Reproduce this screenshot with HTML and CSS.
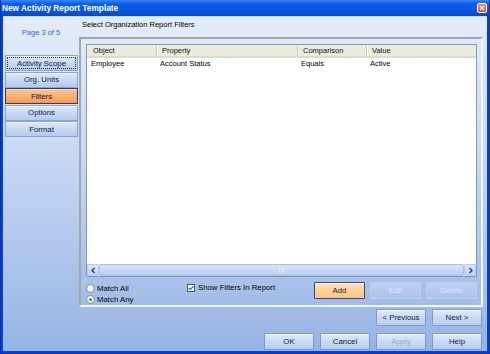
FILE: index.html
```html
<!DOCTYPE html>
<html lang="en">

<head>
    <meta charset="UTF-8">
    <title>New Activity Report Template</title>
    <link rel="stylesheet" href="styles.css">
</head>

<body>
    <div class="window">
        <div class="titlebar">
            <span class="title">New Activity Report Template</span>
            <span class="close">
                <svg width="10" height="10" viewBox="0 0 10 10">
                    <path d="M3 3L7 7M7 3L3 7" stroke="#fff" stroke-width="1.4" fill="none" />
                </svg>
            </span>
        </div>

        <div class="client">
            <div class="top">
                <div class="nav">
                    <div class="page">Page 3 of 5</div>
                    <div class="steps">
                        <div class="step focus"><span>Activity Scope</span></div>
                        <div class="step">Org. Units</div>
                        <div class="step active">Filters</div>
                        <div class="step">Options</div>
                        <div class="step">Format</div>
                    </div>
                </div>

                <div class="main">
                    <div class="heading">Select Organization Report Filters</div>
                    <div class="panel">
                        <div class="list">
                            <div class="list-head">
                                <span>Object</span>
                                <span>Property</span>
                                <span>Comparison</span>
                                <span>Value</span>
                            </div>
                            <div class="list-body">
                                <div class="list-row">
                                    <span>Employee</span>
                                    <span>Account Status</span>
                                    <span>Equals</span>
                                    <span>Active</span>
                                </div>
                            </div>
                            <div class="hscroll">
                                <span class="arrow">
                                    <svg width="7" height="7" viewBox="0 0 7 7">
                                        <path d="M4.5 1L2 3.5L4.5 6" stroke="#2a3f7c" stroke-width="1.4" fill="none" />
                                    </svg>
                                </span>
                                <span class="thumb">
                                    <svg width="7" height="5" viewBox="0 0 7 5">
                                        <path d="M1.5 0V5M3.5 0V5M5.5 0V5" stroke="#e9f0fb" stroke-width="1" />
                                    </svg>
                                </span>
                                <span class="arrow">
                                    <svg width="7" height="7" viewBox="0 0 7 7">
                                        <path d="M2.5 1L5 3.5L2.5 6" stroke="#2a3f7c" stroke-width="1.4" fill="none" />
                                    </svg>
                                </span>
                            </div>
                        </div>

                        <div class="controls">
                            <div class="radios">
                                <div class="radio"><span class="dot"></span>Match All</div>
                                <div class="radio"><span class="dot on"></span>Match Any</div>
                            </div>
                            <div class="check">
                                <span class="box">
                                    <svg width="6" height="6" viewBox="0 0 6 6">
                                        <path d="M0.7 3L2.3 4.6L5.4 1.2" stroke="#21a121" stroke-width="1.4" fill="none" />
                                    </svg>
                                </span>
                                Show Filters In Report
                            </div>
                            <div class="actions">
                                <button class="btn hot">Add</button>
                                <button class="btn off">Edit</button>
                                <button class="btn off">Delete</button>
                            </div>
                        </div>
                    </div>
                </div>
            </div>

            <div class="footer">
                <div class="row">
                    <button class="btn">&lt; Previous</button>
                    <button class="btn">Next &gt;</button>
                </div>
                <div class="row">
                    <button class="btn">OK</button>
                    <button class="btn">Cancel</button>
                    <button class="btn dim">Apply</button>
                    <button class="btn">Help</button>
                </div>
            </div>
        </div>
    </div>
</body>

</html>
```

FILE: styles.css
```css
* {
    box-sizing: border-box;
}

body {
    margin: 0;
    font-family: 'Liberation Sans', Arial, sans-serif;
    font-size: 7.5px;
    color: #000;
}

.window {
    width: 490px;
    height: 354px;
    display: flex;
    flex-direction: column;
    background: #0842d2;
    border-left: 1px solid #0a2fb0;
    border-right: 1px solid #0a2fb0;
    border-bottom: 1px solid #0a2fb0;
}

.titlebar {
    height: 16px;
    flex: none;
    display: flex;
    align-items: center;
    justify-content: space-between;
    padding: 0 2px 0 1px;
    background: linear-gradient(#3a86f4, #0b5ce8 25%, #0656e0 70%, #0648cc);
    color: #fff;
    font-weight: bold;
    font-size: 8.3px;
}

.close {
    width: 10px;
    height: 10px;
    border: 1px solid #fff;
    border-radius: 2px;
    background: linear-gradient(#f08a6a, #dc4a22);
    display: flex;
}

.close svg {
    margin: -1px;
}

.client {
    flex: 1;
    margin: 0 2px 2px;
    display: flex;
    flex-direction: column;
    background: linear-gradient(#e3ecfa, #c8d9f3 40%, #96b4e3);
    border-top: 1px solid #c9dbf6;
}

/* upper part: steps on the left, filters on the right */
.top {
    height: 290px;
    display: flex;
}

.nav {
    width: 76px;
}

.page {
    padding-top: 11px;
    line-height: 10px;
    text-align: center;
    color: #3568c8;
}

.steps {
    margin-top: 17px;
    padding-left: 2px;
    display: flex;
    flex-direction: column;
    gap: 0.5px;
}

.step {
    width: 73px;
    height: 16px;
    display: flex;
    align-items: center;
    justify-content: center;
    border: 1px solid #86a3d6;
    box-shadow: inset 0 1px 0 #f2f6fd;
    background: linear-gradient(#dce7f9, #b3caef);
    color: #0f1b3c;
    font-size: 7.8px;
}

.step.focus span {
    display: flex;
    align-items: center;
    justify-content: center;
    width: 69px;
    height: 12px;
    border: 1px dotted #27324a;
}

.step.active {
    border-color: #2e3b78;
    box-shadow: inset 0 1px 0 #ffd9b4;
    background: linear-gradient(#ffc791, #f8994c);
}

.main {
    flex: 1;
}

.heading {
    height: 20px;
    padding: 3px 0 0 3px;
    line-height: 10px;
}

.panel {
    height: 270px;
    margin-right: 4px;
    border: 2px solid;
    border-color: #a2a6ad #f3f7fd #f3f7fd #a2a6ad;
    display: flex;
    flex-direction: column;
}

.list {
    height: 234px;
    margin: 5px 4px 0 5px;
    border: 1px solid #7f9db9;
    background: #fff;
    display: flex;
    flex-direction: column;
}

.list-head,
.list-row {
    display: grid;
    grid-template-columns: 69px 141px 69px 1fr;
}

.list-head {
    height: 13px;
    background: #ebeadb;
    border-bottom: 2px solid #dedbca;
}

.list-head span {
    position: relative;
    padding-left: 6px;
    line-height: 11px;
    color: #111;
}

.list-head span + span::before {
    content: '';
    position: absolute;
    left: 0;
    top: 1px;
    height: 10px;
    border-left: 1px solid #c9c6b4;
    border-right: 1px solid #fff;
}

.list-body {
    flex: 1;
}

.list-row span {
    padding-left: 4px;
    line-height: 11px;
}

.hscroll {
    height: 12px;
    display: flex;
    background: #eef3fb;
}

.arrow {
    width: 12px;
    display: flex;
    align-items: center;
    justify-content: center;
    border: 1px solid #b7cbeb;
    border-radius: 1px;
    background: linear-gradient(#dbe6f9, #c0d3f3);
}

.thumb {
    flex: 1;
    display: flex;
    align-items: center;
    justify-content: center;
    border: 1px solid #a7bfe8;
    border-radius: 2px;
    background: linear-gradient(#d6e3f9, #b9cff2);
}

.controls {
    flex: 1;
    display: flex;
    align-items: flex-start;
    padding: 0 4px 0 5px;
}

.radios {
    width: 101px;
    margin-top: 6px;
    display: flex;
    flex-direction: column;
}

.radio {
    height: 11px;
    display: flex;
    align-items: center;
    gap: 2px;
    font-size: 7.8px;
}

.dot {
    width: 9px;
    height: 9px;
    border: 1px solid #8c96a6;
    border-radius: 50%;
    background: radial-gradient(circle at 35% 35%, #fff, #dcdad3);
    display: flex;
    align-items: center;
    justify-content: center;
}

.dot.on::after {
    content: '';
    width: 3px;
    height: 3px;
    border-radius: 50%;
    background: #22a622;
}

.check {
    margin-top: 6px;
    display: flex;
    align-items: center;
    gap: 3px;
    font-size: 7.8px;
}

.box {
    width: 8px;
    height: 8px;
    border: 1px solid #2e5a94;
    background: #fff;
    display: flex;
    align-items: center;
    justify-content: center;
}

.actions {
    margin-left: auto;
    margin-top: 5px;
    display: flex;
    gap: 5px;
}

.btn {
    width: 51px;
    height: 17px;
    padding: 0;
    font: inherit;
    font-size: 7.8px;
    color: #0f1b3c;
    border: 1px solid #7d9ad0;
    border-radius: 1px;
    box-shadow: inset 0 1px 0 #f3f7fe;
    background: linear-gradient(#dfe9f9, #b6ccef);
}

.btn.hot {
    border-color: #3a4690;
    box-shadow: inset 0 1px 0 #fff1dc;
    background: linear-gradient(#ffe0b4, #fbc67e);
}

.btn.off {
    border-color: #bfd1ee;
    box-shadow: none;
    background: linear-gradient(#bcd0f0, #abc3eb);
    color: #dfe7f4;
}

.btn.dim {
    color: #9aabc8;
}

.footer {
    flex: 1;
    display: flex;
    flex-direction: column;
    align-items: flex-end;
    gap: 7px;
    padding: 2px 5px 0 0;
}

.footer .row {
    display: flex;
    gap: 6px;
}

.footer .btn {
    width: 50px;
}
```
